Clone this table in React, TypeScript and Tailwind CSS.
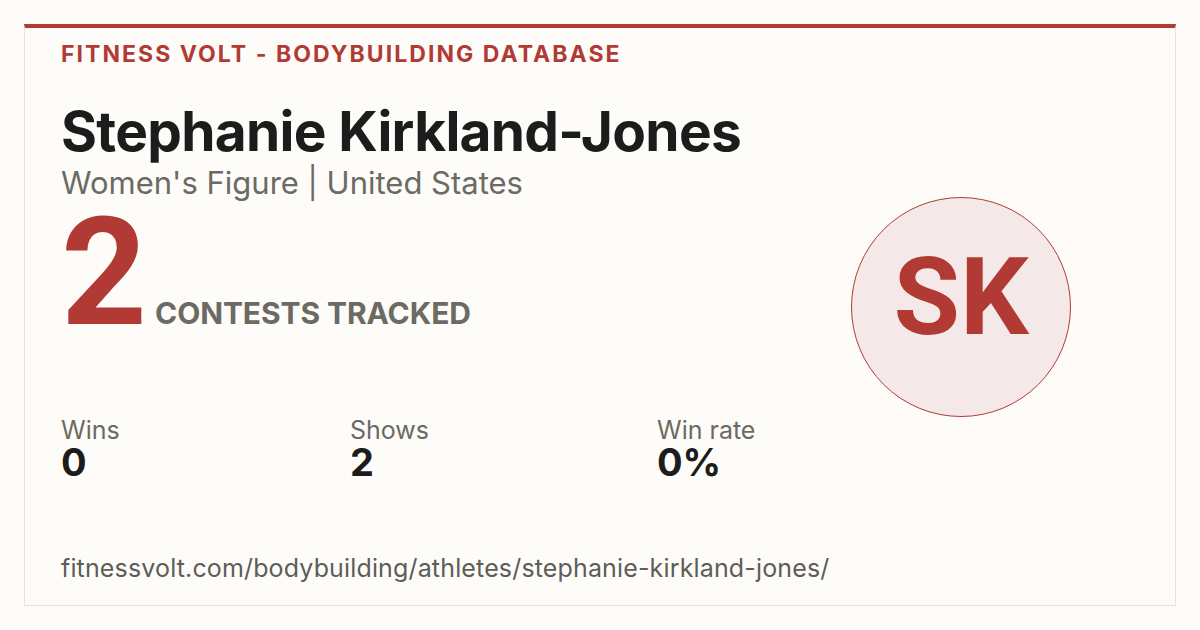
const stats = [
  { label: 'Wins', value: '0', width: 'w-[289px]' },
  { label: 'Shows', value: '2', width: 'w-[307px]' },
  { label: 'Win rate', value: '0%', width: 'w-[160px]' },
];

export default function App() {
  return (
    <div className="w-[1200px] h-[630px] bg-[#fdfcf8] p-6 font-['Inter',sans-serif]">
      <div className="h-[582px] border border-[#e6e3dc] border-t-4 border-t-[#b23a35] flex pl-[36px] pr-[104px]">
        <div className="flex-1 min-w-0 flex flex-col">
          <div className="mt-[15px] text-[23px] leading-none font-bold tracking-[2.05px] text-[#b23a35] uppercase">
            Fitness Volt - Bodybuilding Database
          </div>
          <h1 className="mt-[38px] text-[55px] leading-none font-bold tracking-[-0.7px] text-[#1c1c1c]">
            Stephanie Kirkland-Jones
          </h1>
          <div className="mt-[8px] text-[31px] leading-none text-[#6b6a64]">
            Women's Figure | United States
          </div>
          <div className="flex items-baseline">
            <span className="font-['Roboto',sans-serif] text-[150px] leading-none font-bold text-[#b23a35]">2</span>
            <span className="ml-[8px] text-[30px] leading-none font-bold tracking-[-0.1px] text-[#6b6a63] uppercase">
              Contests tracked
            </span>
          </div>
          <div className="mt-[69px] flex">
            {stats.map((s) => (
              <div key={s.label} className={s.width}>
                <div className="text-[25px] leading-[26px] text-[#6b6a64]">{s.label}</div>
                <div className="text-[38px] leading-[38px] font-bold text-[#1c1c1c]">{s.value}</div>
              </div>
            ))}
          </div>
          <div className="mt-[75px] text-[25px] leading-none tracking-[0.15px] text-[#5e5d58]">
            fitnessvolt.com/bodybuilding/athletes/stephanie-kirkland-jones/
          </div>
        </div>
        <div className="mt-[169px]">
          <div className="w-[220px] h-[220px] rounded-full border border-[#b23a35] bg-[#f5e8e8] flex flex-col items-center pt-[45px]">
            <span className="font-['Roboto',sans-serif] text-[108px] leading-none font-bold text-[#b23a35]">SK</span>
          </div>
        </div>
      </div>
    </div>
  );
}
